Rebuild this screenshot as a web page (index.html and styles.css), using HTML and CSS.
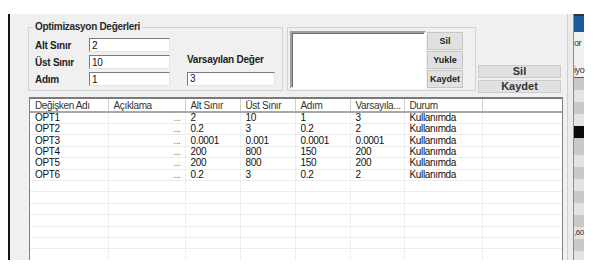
FILE: index.html
```html
<!DOCTYPE html>
<html lang="tr">
<head>
    <meta charset="UTF-8">
    <meta name="viewport" content="width=device-width, initial-scale=1.0">
    <title>Optimizasyon Değerleri</title>
    <link rel="stylesheet" href="styles.css">
</head>
<body>
    <div class="screen">
        <div class="edge"></div>
        <div class="window">
            <div class="top">
                <fieldset class="group values">
                    <legend>Optimizasyon Değerleri</legend>
                    <div class="fields">
                        <label class="r1" for="altSinir">Alt Sınır</label>
                        <input type="text" id="altSinir" class="field r1" value="2">
                        <label class="r2" for="ustSinir">Üst Sınır</label>
                        <input type="text" id="ustSinir" class="field r2" value="10">
                        <label class="r3" for="adim">Adım</label>
                        <input type="text" id="adim" class="field r3" value="1">
                        <label class="default-label" for="varsayilan">Varsayılan Değer</label>
                        <input type="text" id="varsayilan" class="field wide" value="3">
                    </div>
                </fieldset>

                <fieldset class="group presets">
                    <div class="presets-inner">
                        <div class="listbox"></div>
                        <div class="mini-buttons">
                            <button class="btn">Sil</button>
                            <button class="btn">Yukle</button>
                            <button class="btn">Kaydet</button>
                        </div>
                    </div>
                </fieldset>

                <div class="actions">
                    <button class="btn-big">Sil</button>
                    <button class="btn-big">Kaydet</button>
                </div>
            </div>

            <div class="list">
                <table>
                    <colgroup>
                        <col class="c-name">
                        <col class="c-desc">
                        <col class="c-num">
                        <col class="c-num">
                        <col class="c-num">
                        <col class="c-def">
                        <col class="c-state">
                        <col class="c-rest">
                    </colgroup>
                    <thead>
                        <tr>
                            <th>Değişken Adı</th>
                            <th>Açıklama</th>
                            <th>Alt Sınır</th>
                            <th>Üst Sınır</th>
                            <th>Adım</th>
                            <th>Varsayıla...</th>
                            <th>Durum</th>
                            <th></th>
                        </tr>
                    </thead>
                    <tbody>
                        <tr><td>OPT1</td><td class="dots">...</td><td>2</td><td>10</td><td>1</td><td>3</td><td>Kullanımda</td><td></td></tr>
                        <tr><td>OPT2</td><td class="dots">...</td><td>0.2</td><td>3</td><td>0.2</td><td>2</td><td>Kullanımda</td><td></td></tr>
                        <tr><td>OPT3</td><td class="dots">...</td><td>0.0001</td><td>0.001</td><td>0.0001</td><td>0.0001</td><td>Kullanımda</td><td></td></tr>
                        <tr><td>OPT4</td><td class="dots">...</td><td>200</td><td>800</td><td>150</td><td>200</td><td>Kullanımda</td><td></td></tr>
                        <tr><td>OPT5</td><td class="dots">...</td><td>200</td><td>800</td><td>150</td><td>200</td><td>Kullanımda</td><td></td></tr>
                        <tr><td>OPT6</td><td class="dots">...</td><td>0.2</td><td>3</td><td>0.2</td><td>2</td><td>Kullanımda</td><td></td></tr>
                        <tr><td></td><td></td><td></td><td></td><td></td><td></td><td></td><td></td></tr>
                        <tr><td></td><td></td><td></td><td></td><td></td><td></td><td></td><td></td></tr>
                        <tr><td></td><td></td><td></td><td></td><td></td><td></td><td></td><td></td></tr>
                        <tr><td></td><td></td><td></td><td></td><td></td><td></td><td></td><td></td></tr>
                        <tr><td></td><td></td><td></td><td></td><td></td><td></td><td></td><td></td></tr>
                        <tr><td></td><td></td><td></td><td></td><td></td><td></td><td></td><td></td></tr>
                        <tr><td></td><td></td><td></td><td></td><td></td><td></td><td></td><td></td></tr>
                        <tr><td></td><td></td><td></td><td></td><td></td><td></td><td></td><td></td></tr>
                    </tbody>
                </table>
            </div>
        </div>
        <div class="splitter"></div>
        <div class="side">
            <div class="s-top"></div>
            <div class="s-blue"></div>
            <div class="s-text">or</div>
            <div class="s-link">iyo</div>
            <div class="s-dark"></div>
            <div class="s-light"></div>
            <div class="s-dark"></div>
            <div class="s-light"></div>
            <div class="s-black"></div>
            <div class="s-dark tall"></div>
            <div class="s-light"></div>
            <div class="s-dark"></div>
            <div class="s-light"></div>
            <div class="s-dark"></div>
            <div class="s-light"></div>
            <div class="s-dark"></div>
            <div class="s-light s-num">,60</div>
            <div class="s-dark"></div>
            <div class="s-light"></div>
        </div>
    </div>
</body>
</html>
```

FILE: styles.css
```css
body {
    margin: 0;
    background: #fff;
    font-family: "Liberation Sans", Arial, sans-serif;
    font-size: 10px;
    color: #111;
}
.screen {
    display: flex;
    margin: 14px 0 0 8px;
    width: 576px;
    height: 246px;
}
.edge {
    width: 2px;
    background: #141414;
}
.window {
    width: 557px;
    box-sizing: border-box;
    background: #f0f0f0;
    padding: 7px 0 0 18px;
    overflow: hidden;
    display: flex;
    flex-direction: column;
}
.top {
    display: flex;
    align-items: flex-start;
}
.group {
    margin: 0;
    min-width: 0;
    border: 1px solid #d3d3d3;
    box-sizing: border-box;
}
.values {
    width: 255px;
    padding: 5px 0 4px 6px;
}
legend {
    font: bold 10px "Liberation Sans", Arial, sans-serif;
    letter-spacing: -0.3px;
    line-height: 12px;
    padding: 0 2px;
    margin-left: -2px;
    color: #2b2b2b;
}
.fields {
    display: grid;
    grid-template-columns: 54px 98px 88px;
    grid-template-rows: repeat(3, 14px);
    row-gap: 3px;
    align-items: center;
}
.fields label {
    grid-column: 1;
    font: bold 10px "Liberation Sans", Arial, sans-serif;
    letter-spacing: -0.25px;
    color: #222;
}
.r1 { grid-row: 1; }
.r2 { grid-row: 2; }
.r3 { grid-row: 3; }
.fields .default-label {
    grid-column: 3;
    grid-row: 2;
    align-self: start;
    margin-top: -1px;
}
.field {
    grid-column: 2;
    width: 81px;
    height: 14px;
    box-sizing: border-box;
    margin: 0;
    padding: 0 0 0 2px;
    background: #fff;
    border: 1px solid;
    border-color: #7a7a7a #e4e4e4 #e4e4e4 #7a7a7a;
    font: 10px "Liberation Sans", Arial, sans-serif;
    letter-spacing: -0.3px;
    line-height: 12px;
    color: #111;
    outline: none;
}
.field.wide {
    width: 88px;
    grid-column: 3;
    grid-row: 3;
    margin-top: -1px;
}
.presets {
    width: 189px;
    margin: 6px 0 0 4px;
    padding: 3px 12px 1px 2px;
}
.presets-inner {
    display: flex;
    gap: 1px;
    align-items: flex-start;
}
.listbox {
    width: 136px;
    height: 58px;
    box-sizing: border-box;
    background: #fff;
    border: 2px solid;
    border-color: #a0a0a0 #fff #fff #a0a0a0;
    box-shadow: inset 1px 1px 0 #6d6d6d;
}
.mini-buttons {
    display: flex;
    flex-direction: column;
    gap: 1px;
    margin-top: 1px;
}
.btn {
    width: 36px;
    height: 18px;
    padding: 0;
    background: #e1e1e1;
    border: 1px solid #c6c6c6;
    font: bold 9px "Liberation Sans", Arial, sans-serif;
    color: #222;
}
.actions {
    width: 83px;
    margin: 44px 0 0 2px;
    display: flex;
    flex-direction: column;
    gap: 2px;
}
.btn-big {
    height: 13px;
    padding: 0;
    background: #e1e1e1;
    border: 1px solid #cdcdcd;
    font: bold 11px "Liberation Sans", Arial, sans-serif;
    line-height: 11px;
    color: #333;
}
.list {
    width: 534px;
    height: 180px;
    flex: none;
    box-sizing: border-box;
    margin: 4px 0 0 1px;
    background: #fff;
    border: 1px solid #7f7f7f;
    border-top: 2px solid #7a7a7a;
    overflow: hidden;
}
table {
    width: 532px;
    border-collapse: collapse;
    table-layout: fixed;
    letter-spacing: -0.35px;
}
.c-name { width: 78px; }
.c-desc { width: 77px; }
.c-num { width: 55px; }
.c-def { width: 54px; }
.c-state { width: 78px; }
.c-rest { width: 80px; }
th {
    height: 12px;
    padding: 0 0 0 5px;
    text-align: left;
    font-weight: normal;
    line-height: 11px;
    color: #333;
    background: #fff;
    border-right: 1px solid #cfcfcf;
    border-bottom: 2px solid #a8a8a8;
    white-space: nowrap;
    overflow: hidden;
}
tbody tr {
    height: 11.4px;
}
td {
    padding: 0 0 0 5px;
    line-height: 10px;
    border-right: 1px solid #efefef;
    border-bottom: 1px solid #ececec;
    white-space: nowrap;
    overflow: hidden;
}
td.dots {
    text-align: right;
    padding-right: 4px;
    color: #777;
}
.splitter {
    width: 5px;
    background: #ebebeb;
    border-left: 1px solid #cfcfcf;
    border-right: 1px solid #8e8e8e;
}
.side {
    width: 10px;
    display: flex;
    flex-direction: column;
    font: 9px "Liberation Sans", Arial, sans-serif;
    letter-spacing: -0.4px;
    color: #333;
    white-space: nowrap;
}
.s-top { height: 2px; flex: none; background: #3b2f26; }
.s-blue { height: 16px; flex: none; background: #1b5d9c; }
.s-text { height: 25px; flex: none; background: #f0f0f0; line-height: 22px; }
.s-link {
    height: 21px;
    flex: none;
    box-sizing: border-box;
    background: #f0f0f0;
    line-height: 26px;
    border-bottom: 1px solid #555;
}
.s-dark { height: 12px; flex: none; background: #c9c9c9; }
.s-dark.tall { height: 17px; }
.s-light { height: 12px; flex: none; background: #e3e3e3; }
.s-black { height: 12px; flex: none; background: #0b0b0b; }
.s-num { font-size: 8px; line-height: 12px; }
```
